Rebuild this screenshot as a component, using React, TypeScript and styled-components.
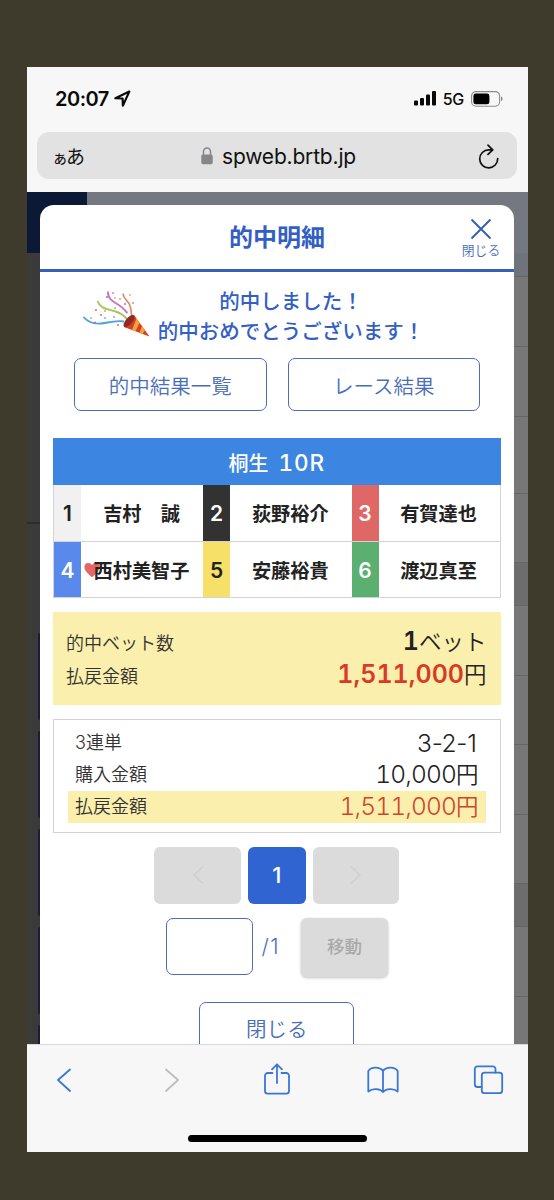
import React from "react";
import styled, { createGlobalStyle, css } from "styled-components";

const Global = createGlobalStyle`
  *, *::before, *::after { box-sizing: border-box; }
  html, body { margin: 0; padding: 0; background: #3e3b2d; }
  body { font-family: Inter, "Noto Sans CJK JP", sans-serif; color: #222; }
`;

const BLUE = "#335fc4";
const THIN = "#4a6fb8";

const Stage = styled.main`
  width: 554px;
  height: 1200px;
  padding: 67px 26px 48px 27px;
  overflow: hidden;
  background: #3e3b2d;
`;

const Phone = styled.div`
  display: flex;
  flex-direction: column;
  width: 501px;
  height: 1085px;
  background: #f7f7f7;
  overflow: hidden;
`;

const StatusBar = styled.header`
  display: flex;
  align-items: center;
  height: 65px;
  padding: 0 25px 2px 28px;
  color: #0a0a0a;
`;

const Clock = styled.span`
  font-size: 20px;
  font-weight: 600;
  letter-spacing: -0.5px;
  margin-right: 5px;
`;

const StatusRight = styled.div`
  display: flex;
  align-items: center;
  margin-left: auto;
`;

const Network = styled.span`
  font-size: 16px;
  font-weight: 500;
  letter-spacing: -0.3px;
  margin: 1px 7px 0 7px;
`;

const AddressBar = styled.div`
  display: flex;
  align-items: center;
  flex: none;
  width: 480px;
  height: 47px;
  margin: 0 0 13px 10px;
  padding: 1px 18px 0 15px;
  border-radius: 12px;
  background: #e2e2e3;
  color: #111;
`;

const TextSize = styled.span`
  font-family: "Noto Sans CJK JP", sans-serif;
  font-weight: 400;
  font-size: 19px;
  line-height: 24px;
  width: 149px;
  white-space: nowrap;
  small { font-size: 16px; margin-right: -2px; }
`;

const Url = styled.span`
  font-size: 21px;
  letter-spacing: -0.18px;
  margin-left: 9px;
  margin-right: auto;
`;

const Viewport = styled.section`
  position: relative;
  flex: none;
  height: 852px;
  padding: 13px 14px 0 13px;
  overflow: hidden;
`;

const Behind = styled.div`
  position: absolute;
  inset: 0;
  display: flex;
  flex-direction: column;
  background: #3b3b3d;
`;

const BehindHead = styled.div`
  display: flex;
  flex: none;
  height: 61px;
  background: #747880;
`;

const BehindLogo = styled.div`
  width: 60px;
  background: #0c1936;
`;

const BehindBody = styled.div`
  display: flex;
  justify-content: space-between;
  flex: 1;
`;

const LeftRail = styled.div`
  width: 13px;
  display: flex;
  flex-direction: column;
  align-items: flex-end;
  padding-top: 269px;
  background: linear-gradient(90deg, #3c3b34, #3a3a3d 80%);
`;

const RailRule = styled.div`
  width: 13px;
  height: 2px;
  margin-bottom: 109px;
  background: #2b2b30;
`;

const RailButton = styled.div`
  width: 2px;
  height: 87px;
  margin-bottom: 11px;
  flex: none;
  border-radius: 2px 0 0 2px;
  background: #1d1b3c;
`;

const RightRail = styled.div`
  width: 60px;
  background: #777;
`;

const RailRow = styled.div<{ $h: number; $tone?: string }>`
  height: ${(p) => p.$h}px;
  border-bottom: 1px solid #666;
  background: ${(p) => p.$tone || "#777"};
`;

const Modal = styled.div`
  position: relative;
  width: 474px;
  height: 860px;
  border-radius: 14px 14px 0 0;
  background: #fff;
`;

const ModalHead = styled.div`
  display: grid;
  grid-template-columns: 66px 1fr 66px;
  align-items: center;
  height: 67px;
  border-bottom: 3px solid #365fb8;
`;

const Title = styled.h1`
  grid-column: 2;
  margin: 0;
  padding-top: 2px;
  text-align: center;
  font-size: 24px;
  line-height: 30px;
  font-weight: 700;
  color: ${BLUE};
`;

const CloseButton = styled.button`
  display: flex;
  flex-direction: column;
  align-items: center;
  padding: 2px 0 0;
  border: 0;
  background: none;
  color: ${THIN};
  font: 350 12.8px/18px "Noto Sans CJK JP", sans-serif;
  svg { margin-bottom: 1px; }
`;

const Cheer = styled.div`
  position: relative;
  padding-top: 15px;
  height: 86px;
  text-align: center;
  font-size: 20.5px;
  line-height: 30px;
  font-weight: 500;
  white-space: nowrap;
  color: ${BLUE};
`;

const CheerLine = styled.div<{ $shift: number }>`
  padding-left: ${(p) => p.$shift}px;
`;

const Popper = styled.svg`
  position: absolute;
  left: 42px;
  top: 18px;
`;

const Actions = styled.div`
  display: flex;
  gap: 21px;
  padding-left: 34px;
`;

const Outline = styled.button<{ $w: number }>`
  width: ${(p) => p.$w}px;
  height: 53px;
  padding: 0;
  border: 1.5px solid ${THIN};
  border-radius: 7px;
  background: #fff;
  color: ${THIN};
  font: 350 20.5px/30px "Noto Sans CJK JP", sans-serif;
`;

const Body = styled.div`
  width: 447.500px;
  margin: 27px 0 0 13px;
`;

const RaceTitle = styled.div`
  display: flex;
  justify-content: center;
  align-items: baseline;
  gap: 10px;
  height: 47px;
  line-height: 49px;
  color: #fff;
  background: #3c86e2;
  font-size: 20px;
  font-weight: 500;
  b {
    font-size: 22.500px;
    font-weight: 500;
    letter-spacing: 0.9px;
    font-feature-settings: "tnum";
  }
`;

const Racers = styled.div`
  display: grid;
  grid-template-columns: 149px 148.5px 1fr;
  border: solid #d2d3d6;
  border-width: 0 1px 0 1px;
`;

const Racer = styled.div`
  position: relative;
  display: flex;
  height: 56.5px;
  border-bottom: 1.5px solid #d2d3d6;
`;

const Lane = styled.span<{ $bg: string; $fg: string }>`
  width: 27px;
  flex: none;
  display: grid;
  place-items: center;
  padding-top: 2px;
  font-size: 21px;
  font-weight: 600;
  background: ${(p) => p.$bg};
  color: ${(p) => p.$fg};
`;

const Name = styled.span`
  position: relative;
  flex: 1;
  padding-right: 1px;
  text-align: center;
  font-size: 19.2px;
  line-height: 58px;
  font-weight: 600;
  white-space: nowrap;
  color: #222;
`;

const Heart = styled.svg`
  position: absolute;
  left: 30px;
  top: 20px;
`;

const Summary = styled.div`
  height: 93px;
  margin-top: 14px;
  padding: 12px 14px 0 13px;
  background: #fbefad;
`;

const Row = styled.div<{ $h: number }>`
  display: flex;
  align-items: center;
  justify-content: space-between;
  height: ${(p) => p.$h}px;
  white-space: nowrap;
`;

const Label = styled.span<{ $drop?: number }>`
  padding-top: ${(p) => p.$drop || 0}px;
  font-size: 18px;
  line-height: 26px;
  font-weight: 350;
  color: #333;
`;

const Value = styled.span<{ $red?: boolean; $strong?: boolean }>`
  display: flex;
  align-items: baseline;
  font-size: 22.5px;
  line-height: 30px;
  font-weight: 350;
  color: ${(p) => (p.$red ? "#d0452a" : "#222")};
  b {
    font-size: 25px;
    font-weight: 600;
    font-feature-settings: "tnum";
    ${(p) => p.$strong && css`color: #d93a26;`}
  }
  i {
    font-style: normal;
    font-size: 24.5px;
    letter-spacing: -0.85px;
    font-feature-settings: "tnum";
  }
`;

const Combo = styled.span`
  font-size: 24.5px;
  line-height: 30px;
  font-weight: 350;
  letter-spacing: -0.3px;
  padding-right: 2px;
`;

const Detail = styled.div`
  height: 114px;
  margin-top: 13.5px;
  padding: 7px 14px 0 14px;
  border: 1.5px solid #d2d3d5;
`;

const DetailRow = styled(Row)<{ $hot?: boolean }>`
  padding: 0 7px;
  background: ${(p) => (p.$hot ? "#fbefad" : "none")};
`;

const Pager = styled.nav`
  display: flex;
  justify-content: center;
  gap: 7px;
  margin-top: 14px;
`;

const PageButton = styled.button<{ $on?: boolean }>`
  display: grid;
  place-items: center;
  width: ${(p) => (p.$on ? 58 : 86.5)}px;
  height: 57px;
  border: 0;
  border-radius: 6px;
  background: ${(p) => (p.$on ? "#3064d0" : "#dbdbdb")};
  color: #fff;
  font: 500 22px/1 Inter, sans-serif;
`;

const Jump = styled.div`
  display: flex;
  align-items: flex-start;
  margin: 14px 0 0 113px;
`;

const PageInput = styled.input`
  width: 86.5px;
  height: 57px;
  border: 1.5px solid ${THIN};
  border-radius: 7px;
  background: #fff;
`;

const Total = styled.span`
  width: 48.5px;
  padding-left: 9px;
  color: ${THIN};
  font: 350 21px/57px Inter, sans-serif;
  letter-spacing: 1.5px;
`;

const Go = styled.button`
  width: 87px;
  height: 59px;
  padding: 0 0 2px;
  border: 0;
  border-radius: 6px;
  background: #dbdbdb;
  box-shadow: 0 1px 3px rgba(0, 0, 0, 0.25);
  color: #a9a9a9;
  font: 500 17.5px/26px "Noto Sans CJK JP", sans-serif;
`;

const CloseRow = styled.div`
  display: flex;
  justify-content: center;
  margin-top: 25px;
`;

const Toolbar = styled.footer`
  position: relative;
  flex: 1;
  display: flex;
  justify-content: space-between;
  align-items: flex-start;
  padding: 17px 23px 0 21px;
  border-top: 1px solid #d8d8d8;
  background: #f7f7f7;
`;

const ToolIcon = styled.svg.attrs({ width: 32, height: 36, fill: "none" })<{ $off?: boolean }>`
  stroke: ${(p) => (p.$off ? "#bdbdbf" : "#3a76d6")};
  stroke-width: 1.8;
  stroke-linejoin: round;
  stroke-linecap: round;
`;

const HomeBar = styled.div`
  position: absolute;
  left: 161px;
  bottom: 10.5px;
  width: 179px;
  height: 6.5px;
  border-radius: 4px;
  background: #000;
`;

const racers = [
  { n: 1, name: "吉村　誠", bg: "#f1f1f2", fg: "#222" },
  { n: 2, name: "荻野裕介", bg: "#323232", fg: "#fff" },
  { n: 3, name: "有賀達也", bg: "#df6866", fg: "#fff" },
  { n: 4, name: "西村美智子", bg: "#5989ea", fg: "#fff", fav: true },
  { n: 5, name: "安藤裕貴", bg: "#f6e067", fg: "#222" },
  { n: 6, name: "渡辺真至", bg: "#5aaf71", fg: "#fff" },
];

const confetti: [number, number, string][] = [
  [9, 28, "#e9a04a"], [14, 20, "#d8506a"], [19, 25, "#b55bb0"], [25, 7, "#b55bb0"],
  [23, 21, "#dd9a4c"], [33, 18, "#9abf52"], [13, 32.5, "#c65a9b"], [32, 27, "#72a0d8"],
  [31, 3, "#d978a8"], [38, 9, "#e0a04a"], [43, 14, "#d7588b"], [48, 5, "#e2b154"],
  [51, 13, "#cf7bc0"], [36, 35, "#cf5580"], [23, 28, "#79b0df"], [33, 8, "#e2b154"],
];

export default function App() {
  return (
    <Stage>
      <Global />
      <Phone>
        <StatusBar>
          <Clock>20:07</Clock>
          <svg width="17" height="17" viewBox="0 0 17 17" fill="none" stroke="#0a0a0a" strokeWidth="2.2" strokeLinejoin="round">
            <path d="M15.300 1.600 1.400 8.200l7.200.300.300 7.100z" />
          </svg>
          <StatusRight>
            <svg width="22" height="15" viewBox="0 0 22 15" fill="#0a0a0a">
              <rect x="0" y="9.5" width="4" height="5" rx="1" />
              <rect x="6" y="7" width="4" height="7.5" rx="1" />
              <rect x="12" y="3.5" width="4" height="11" rx="1" />
              <rect x="18" y="0" width="4" height="14.5" rx="1" />
            </svg>
            <Network>5G</Network>
            <svg width="32" height="16" viewBox="0 0 32 16">
              <rect x="0.6" y="0.6" width="28" height="14.6" rx="4.4" fill="none" stroke="#8a8a8a" strokeWidth="1.1" />
              <rect x="2.4" y="2.5" width="16" height="10.8" rx="2.4" fill="#000" />
              <path d="M30 5.6c2 .7 2 4 0 4.7z" fill="#8a8a8a" />
            </svg>
          </StatusRight>
        </StatusBar>

        <AddressBar>
          <TextSize><small>ぁ</small>あ</TextSize>
          <svg width="12" height="18" viewBox="0 0 12 18">
            <path d="M2.5 9V4.600a3.5 3.7 0 0 1 7 0V9" fill="none" stroke="#85858a" strokeWidth="1.5" />
            <rect x="0.3" y="7.600" width="11.4" height="9.600" rx="1.6" fill="#85858a" />
          </svg>
          <Url>spweb.brtb.jp</Url>
          <svg width="21" height="25" viewBox="0 0 21 25" fill="none" stroke="#111" strokeWidth="1.7" strokeLinecap="round" strokeLinejoin="round">
            <path d="M14.500 5.800H10.700A9 9 0 1 0 19.700 14.500" />
            <path d="M10 1.200 14.700 5.800 10 10.400" />
          </svg>
        </AddressBar>

        <Viewport>
          <Behind>
            <BehindHead><BehindLogo /></BehindHead>
            <BehindBody>
              <LeftRail>
                <RailRule />
                <RailButton /><RailButton /><RailButton /><RailButton /><RailButton />
              </LeftRail>
              <RightRail>
                <RailRow $h={24} $tone="#6f737c" />
                <RailRow $h={70} /><RailRow $h={70} /><RailRow $h={77} /><RailRow $h={69} />
                <RailRow $h={43} $tone="#6d6d6d" />
                <RailRow $h={70} /><RailRow $h={69} /><RailRow $h={70} /><RailRow $h={69} />
                <RailRow $h={43} $tone="#6d6d6d" />
                <RailRow $h={70} />
              </RightRail>
            </BehindBody>
          </Behind>

          <Modal>
            <ModalHead>
              <Title>的中明細</Title>
              <CloseButton>
                <svg width="22" height="22" viewBox="0 0 22 22" stroke="#335fb4" strokeWidth="1.9">
                  <path d="M1.5 1.5 20.5 20.5M20.5 1.5 1.5 20.5" />
                </svg>
                閉じる
              </CloseButton>
            </ModalHead>

            <Cheer>
              <Popper width="70" height="50" viewBox="0 0 70 50" fill="none">
                <path d="M1.5 27C8 34.500 16 34.500 24 32.800S37 30.500 42 31.500" stroke="#4aa3df" strokeWidth="1.900" />
                <path d="M15.500 11C18 18.500 25 19 32 21S41 25 45 29" stroke="#a5c65a" strokeWidth="1.900" />
                <path d="M26 1.5C25.500 9 31 11.500 36 14.500S42 19 45.500 23" stroke="#c977c0" strokeWidth="1.900" />
                <path d="M41 3.5C41.500 9 45.500 10 47.500 14.500S49 20 49.500 25" stroke="#d98662" strokeWidth="1.600" />
                {confetti.map(([x, y, c], i) => (
                  <circle key={i} cx={x} cy={y} r="0.9" fill={c} />
                ))}
                <path d="M52 25 67.500 46.500 42 37z" fill="#d93c26" />
                <path d="M54.500 28.500 50 40l3.500 1.300L57.500 33zM60 36l-2.500 6.900 3 1.100L63 40.300z" fill="#f2a43a" />
                <ellipse cx="47" cy="31" rx="7.600" ry="3.300" transform="rotate(-50 47 31)" fill="#8e2a22" />
              </Popper>
              <CheerLine $shift={28}>的中しました！</CheerLine>
              <CheerLine $shift={28}>的中おめでとうございます！</CheerLine>
            </Cheer>

            <Actions>
              <Outline $w={192.5}>的中結果一覧</Outline>
              <Outline $w={192.5}>レース結果</Outline>
            </Actions>

            <Body>
              <RaceTitle>桐生 <b>10R</b></RaceTitle>
              <Racers>
                {racers.map((r) => (
                  <Racer key={r.n}>
                    <Lane $bg={r.bg} $fg={r.fg}>{r.n}</Lane>
                    {r.fav && (
                      <Heart width="16" height="16" viewBox="0 0 16 16">
                        <path d="M8 15.200C3 10.800.400 8.400.400 5A4.100 4.100 0 0 1 8 2.900 4.100 4.100 0 0 1 15.600 5C15.600 8.400 13 10.800 8 15.200z" fill="#e26868" />
                      </Heart>
                    )}
                    <Name>{r.name}</Name>
                  </Racer>
                ))}
              </Racers>

              <Summary>
                <Row $h={34}>
                  <Label $drop={5}>的中ベット数</Label>
                  <Value><b>1</b>ベット</Value>
                </Row>
                <Row $h={33}>
                  <Label $drop={4}>払戻金額</Label>
                  <Value $strong><b>1,511,000</b>円</Value>
                </Row>
              </Summary>

              <Detail>
                <DetailRow $h={32}>
                  <Label>3連単</Label>
                  <Combo>3-2-1</Combo>
                </DetailRow>
                <DetailRow $h={32}>
                  <Label>購入金額</Label>
                  <Value><i>10,000</i>円</Value>
                </DetailRow>
                <DetailRow $h={32} $hot>
                  <Label>払戻金額</Label>
                  <Value $red><i>1,511,000</i>円</Value>
                </DetailRow>
              </Detail>

              <Pager>
                <PageButton>
                  <svg width="12" height="20" viewBox="0 0 12 20" fill="none" stroke="#cfcfcf" strokeWidth="1.5"><path d="M11 1.5 2 10l9 8.500" /></svg>
                </PageButton>
                <PageButton $on>1</PageButton>
                <PageButton>
                  <svg width="12" height="20" viewBox="0 0 12 20" fill="none" stroke="#cfcfcf" strokeWidth="1.5"><path d="M1 1.500 10 10l-9 8.500" /></svg>
                </PageButton>
              </Pager>

              <Jump>
                <PageInput aria-label="ページ" />
                <Total>/1</Total>
                <Go>移動</Go>
              </Jump>

              <CloseRow>
                <Outline $w={155}>閉じる</Outline>
              </CloseRow>
            </Body>
          </Modal>
        </Viewport>

        <Toolbar>
          <ToolIcon viewBox="-3 0 32 36">
            <path d="M19 7.500 7 18l12 11" />
          </ToolIcon>
          <ToolIcon viewBox="-5 0 32 36" $off>
            <path d="M7 7.500 19 18 7 29" />
          </ToolIcon>
          <ToolIcon viewBox="-2 0 32 36">
            <path d="M9.500 11H4.700A2.700 2.700 0 0 0 2 13.700V29a2.700 2.700 0 0 0 2.700 2.700h18.600A2.700 2.700 0 0 0 26 29V13.700a2.700 2.700 0 0 0-2.700-2.700H18.500" />
            <path d="M14 21V2.500M9 7.300 14 2.300l5 5" />
          </ToolIcon>
          <ToolIcon viewBox="0 0 32 36">
            <path d="M16 9C13 4.500 4 4.500 1.300 9v20.500c4-3.500 12-3 14.700.500 2.700-3.500 10.700-4 14.700-.500V9C28 4.500 19 4.500 16 9zM16 9V30" />
          </ToolIcon>
          <ToolIcon viewBox="0 0 32 36">
            <path d="M8.600 25H4.500A2.700 2.700 0 0 1 1.800 22.300V7A2.700 2.700 0 0 1 4.500 4.300h15.300A2.700 2.700 0 0 1 22.500 7v3.500" />
            <rect x="8.800" y="10.700" width="20.400" height="20.400" rx="2.700" />
          </ToolIcon>
          <HomeBar />
        </Toolbar>
      </Phone>
    </Stage>
  );
}
